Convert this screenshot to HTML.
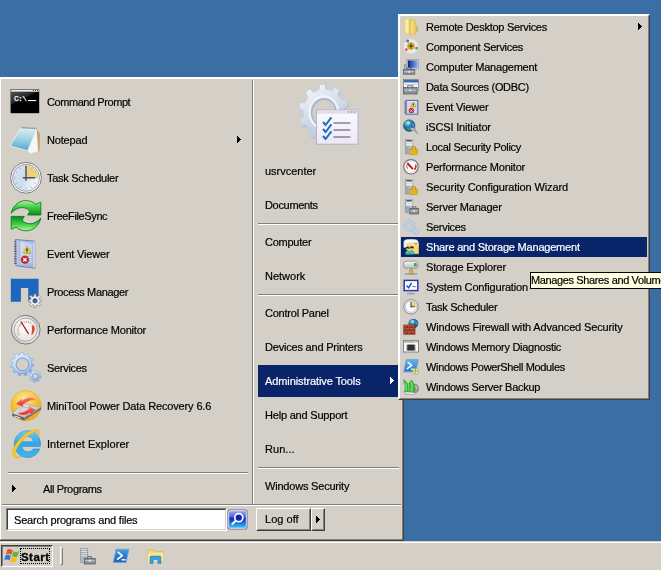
<!DOCTYPE html><html><head><meta charset="utf-8"><title>Start menu</title><style>
html,body{margin:0;padding:0}
body{width:661px;height:570px;background:#3a6ea5;overflow:hidden;position:relative;font-family:"Liberation Sans",sans-serif;font-size:11px;letter-spacing:-0.2px;color:#000;-webkit-font-smoothing:none}
div,span,svg{position:absolute;box-sizing:border-box}
.raised{border:1px solid;border-color:#fff #404040 #404040 #fff;background:#d4d0c8}
.raised>.in{left:0;top:0;right:0;bottom:0;border:1px solid;border-color:#fff #808080 #808080 #fff}
.t{white-space:nowrap;height:14px;line-height:14px;-webkit-text-stroke:0.2px;will-change:transform}
.hl{background:#0a246a}
.w{color:#fff}
.hs{height:2px;border-top:1px solid #808080;border-bottom:1px solid #fff}
.btn{border:1px solid;border-color:#fff #404040 #404040 #fff;background:#d4d0c8}
.btn>.in{left:0;top:0;right:0;bottom:0;border:1px solid;border-color:#d4d0c8 #808080 #808080 #d4d0c8}
</style></head><body>
<div id="taskbar" style="left:0;top:541px;width:661px;height:29px;background:#d4d0c8;border-top:1px solid #d4d0c8"><div style="left:0;top:0;width:661px;height:1px;background:#fff"></div></div>
<div id="startbtn" style="left:1px;top:545px;width:52px;height:22px;background:#d4d0c8;border:1px solid;border-color:#404040 #fff #fff #404040"><div style="left:0;top:0;right:0;bottom:0;border:1px solid;border-color:#808080 #d4d0c8 #d4d0c8 #808080"></div></div>
<svg style="left:4px;top:548px" width="16" height="15" viewBox="0 0 16 15"><path d="M3.3 1.4C5.2 0.4 7 1 8.7 2.4L7.3 7C5.6 5.8 3.8 5.4 1.9 6.4Z" fill="#e8542a"/><path d="M9.3 3.2C11 4.4 13 4.2 15.2 3L13.5 8.4C11.6 9.4 9.8 9.2 8 7.8Z" fill="#6ab43a"/><path d="M1.7 7.2C3.5 6.4 5.2 6.8 6.8 8L5.6 12.6C4 11.4 2.2 11.2 0.2 12.2Z" fill="#2a7cd6"/><path d="M7.6 8.6C9.4 9.9 11.2 10 13.2 9.2L11.5 14.2C9.7 15 8 14.6 6.3 13.4Z" fill="#f6bc1c"/></svg>
<div style="left:20px;top:548px;width:30px;height:16px;border:1px dotted #000"></div>
<span class="t" style="left:21px;top:550px;font-weight:bold;font-size:11.5px;letter-spacing:0.45px;-webkit-text-stroke:0.3px #000">Start</span>
<div style="left:60px;top:547px;width:3px;height:18px;border:1px solid;border-color:#fff #808080 #808080 #fff;background:#d4d0c8"></div>
<svg style="left:79px;top:548px" width="17" height="17" viewBox="0 0 17 17"><path d="M1.6 0.6H8.6V14.6H1.6Z" fill="#e4e8ec" stroke="#7a828c" stroke-width="0.7"/><path d="M2 2.6h6.2M2 4.6h6.2M2 6.6h6.2" stroke="#8a929c" stroke-width="0.8"/><rect x="2" y="8" width="6.2" height="6.2" fill="#aeb6c0"/><path d="M8.8 10.4V8.6h3.6v1.8" fill="none" stroke="#5a6068" stroke-width="0.9"/><rect x="5.4" y="10.4" width="10.8" height="5.6" fill="#8a9098" stroke="#50565e" stroke-width="0.7"/><rect x="6" y="12.2" width="9.6" height="1" fill="#c8ccd2"/><rect x="9.8" y="11.8" width="1.8" height="2" fill="#e8eaee"/></svg>
<svg style="left:112px;top:548px" width="18" height="16" viewBox="0 0 18 16"><defs><linearGradient id="tp" x1="0" y1="0" x2="0" y2="1"><stop offset="0" stop-color="#4a9ae0"/><stop offset="1" stop-color="#1a5ab8"/></linearGradient></defs><path d="M4.2 1.2H17L14 14.4H1.2Z" fill="url(#tp)" stroke="#6aa8e0" stroke-width="0.9" stroke-linejoin="round"/><path d="M5.8 3.8L10.2 7.6L5 11.6" fill="none" stroke="#fff" stroke-width="1.6"/><path d="M9.6 11.8h4" stroke="#fff" stroke-width="1.4"/></svg>
<svg style="left:147px;top:549px" width="17" height="15" viewBox="0 0 17 15"><path d="M0.8 2.4C0.8 1.4 1.2 1 2 1H6.4L7.6 2.4H15C15.8 2.4 16.2 2.8 16.2 3.6V12.6H0.8Z" fill="#f6d978" stroke="#d8b040" stroke-width="0.6"/><path d="M0.8 4.4H16.2V12.6H0.8Z" fill="#fbe9a0"/><path d="M3 14.4V8.6C3 7.4 3.6 7 4.6 7H12.4C13.4 7 14 7.4 14 8.6V14.4H10.8V10.6H6.2V14.4Z" fill="#3aa0dc" stroke="#1a78b8" stroke-width="0.5"/></svg>
<div id="startmenu" class="raised" style="left:-1px;top:77px;width:405px;height:464px"><div class="in"></div></div>
<svg style="left:10px;top:86px" width="32" height="32" viewBox="0 0 32 32"><defs><linearGradient id="cg" x1="0" y1="0" x2="1" y2="1"><stop offset="0" stop-color="#555"/><stop offset="0.45" stop-color="#222"/><stop offset="0.46" stop-color="#000"/></linearGradient></defs><rect x="0.6" y="3.2" width="28.6" height="24" fill="#000"/><rect x="1" y="6" width="28" height="14" fill="url(#cg)"/><rect x="0.6" y="3.2" width="28.6" height="2.8" fill="#8a8a8a"/><rect x="1.2" y="4" width="27.4" height="1.4" fill="#ececec"/><rect x="23" y="4" width="1" height="1" fill="#555"/><rect x="25" y="4" width="1" height="1" fill="#555"/><rect x="27" y="4" width="1" height="1" fill="#555"/><text x="4" y="15" font-family="Liberation Mono,monospace" font-size="8" letter-spacing="-0.7" fill="#fff" stroke="#fff" stroke-width="0.25">C:\</text><rect x="18" y="14" width="8.2" height="1.1" fill="#fff"/></svg>
<span class="t" style="left:47px;top:95px;letter-spacing:-0.43px">Command Prompt</span>
<svg style="left:10px;top:124px" width="32" height="32" viewBox="0 0 32 32"><defs><linearGradient id="ng" x1="0.5" y1="0" x2="0.4" y2="1"><stop offset="0" stop-color="#d8ecf2"/><stop offset="0.5" stop-color="#9cd2e2"/><stop offset="1" stop-color="#48a6c8"/></linearGradient></defs><path d="M27 5.5L29.7 9.6L29.5 27.2L28 27.8Z" fill="#c89a52"/><path d="M26.5 5.2L28.2 27.6L20 29.8L17.4 26.6Z" fill="#f4f6f8" stroke="#cfd6dc" stroke-width="0.5"/><path d="M10.6 4.2L26.7 5.3L17.6 26.8L0.2 21.8Z" fill="url(#ng)" stroke="#e8f2f6" stroke-width="0.8"/><path d="M11.5 3.6L26.5 4.6" stroke="#7a7f86" stroke-width="1.6" stroke-dasharray="1 0.8"/></svg>
<span class="t" style="left:47px;top:133px;letter-spacing:-0.17px">Notepad</span>
<svg style="left:10px;top:162px" width="32" height="32" viewBox="0 0 32 32"><defs><linearGradient id="kg" x1="0" y1="0.3" x2="1" y2="0.8"><stop offset="0" stop-color="#d4e0ee"/><stop offset="0.45" stop-color="#cfdcec"/><stop offset="1" stop-color="#ffffff"/></linearGradient></defs><circle cx="16" cy="15.8" r="15.4" fill="#fefefe" stroke="#6c7076" stroke-width="0.9"/><circle cx="16" cy="15.8" r="13.5" fill="url(#kg)" stroke="#8c9096" stroke-width="0.8"/><path d="M16 15.8V3.4A12.4 12.4 0 0 1 28.4 15.8Z" fill="#f1d07c"/><g stroke="#a2aebe" stroke-width="0.9"><path d="M16 4v1.6M16 26v1.6M4.2 15.8h1.6M26.2 15.8h1.6M10.1 5.6l.8 1.4M21.9 5.6l-.8 1.4M5.8 9.9l1.4.8M5.8 21.7l1.4-.8M10.1 26l.8-1.4M21.9 26l-.8-1.4M26.2 21.7l-1.4-.8M26.2 9.9l-1.4.8"/></g><path d="M16 3.8V18.8" stroke="#3c4856" stroke-width="1.3"/><path d="M12.8 15.8H25.2" stroke="#3c4856" stroke-width="1.4"/></svg>
<span class="t" style="left:47px;top:171px;letter-spacing:-0.28px">Task Scheduler</span>
<svg style="left:10px;top:200px" width="32" height="32" viewBox="0 0 32 32"><defs><linearGradient id="fg" x1="0" y1="0" x2="0" y2="1"><stop offset="0" stop-color="#b4f6a0"/><stop offset="0.45" stop-color="#3ecf44"/><stop offset="1" stop-color="#0c8a1e"/></linearGradient><linearGradient id="fh" x1="0" y1="0" x2="0" y2="1"><stop offset="0" stop-color="#0c8a1e"/><stop offset="0.55" stop-color="#3ecf44"/><stop offset="1" stop-color="#a8f298"/></linearGradient></defs><path d="M1.2 13.2C2.5 7 8 0.6 15.7 0.6C20 0.6 23.5 2 25.8 4.3L30.8 2.1V15H17.6L19.8 11.6C19 9.5 16 7.6 11.9 7.6C8 7.6 4 10 1.2 13.2Z" fill="url(#fg)" stroke="#0a6c18" stroke-width="0.8" stroke-linejoin="round"/><path d="M1.2 13.2C2.5 7 8 0.6 15.7 0.6C20 0.6 23.5 2 25.8 4.3L30.8 2.1V15H17.6L19.8 11.6C19 9.5 16 7.6 11.9 7.6C8 7.6 4 10 1.2 13.2Z" transform="rotate(180 16 15.7)" fill="url(#fg)" stroke="#0a6c18" stroke-width="0.8" stroke-linejoin="round"/></svg>
<span class="t" style="left:47px;top:209px;letter-spacing:-0.38px">FreeFileSync</span>
<svg style="left:10px;top:238px" width="32" height="32" viewBox="0 0 32 32"><defs><linearGradient id="eg" x1="0" y1="0" x2="1" y2="1"><stop offset="0" stop-color="#d2def4"/><stop offset="1" stop-color="#9fb4dc"/></linearGradient></defs><path d="M5.3 1.5L24.6 3.1L24.9 30.2L5.9 27.7Z" fill="#b9c6e4" stroke="#6c7cb6" stroke-width="0.9" stroke-linejoin="round"/><path d="M23.2 4.2L24.6 3.4L24.8 29.8L23.2 28.8Z" fill="#e8ecf8"/><path d="M9.6 3L23 4.3V28.7L9.6 26.9Z" fill="url(#eg)" stroke="#8a9cd0" stroke-width="0.5"/><g stroke="#e4ecfa" stroke-width="0.6"><path d="M10.4 6.6l12 1M10.4 9l12 1M10.4 11.4l12 1M10.4 13.8l12 1M10.4 16.2l12 1M10.4 18.6l12 1M10.4 21l12 1M10.4 23.4l12 1"/></g><g stroke="#5e6684" stroke-width="1.1"><path d="M4 3.8h2.6M4 6.2h2.6M4 8.6h2.6M4 11h2.6M4 13.4h2.6M4 15.8h2.6M4 18.2h2.6M4 20.6h2.6M4 23h2.6M4 25.4h2.6"/></g><path d="M17 8.2L20.8 15.2H13.4Z" fill="#f4dc28" stroke="#b89a08" stroke-width="0.7" stroke-linejoin="round"/><path d="M17 10.4v2.6M17 13.6v1" stroke="#1a1a1a" stroke-width="1.3"/><circle cx="14.9" cy="21.7" r="3.8" fill="#cc2630" stroke="#8e1a22" stroke-width="0.5"/><path d="M13.3 20.1l3.2 3.2M16.5 20.1l-3.2 3.2" stroke="#fff" stroke-width="1.3"/></svg>
<span class="t" style="left:47px;top:247px;letter-spacing:-0.18px">Event Viewer</span>
<svg style="left:10px;top:276px" width="32" height="32" viewBox="0 0 32 32"><path d="M0.8 2.7H28.6V25.8H18.2V11.9H10.9V25.8H0.8Z" fill="#1e67c1"/><path d="M29.49 23.80L31.73 23.81L31.73 25.79L29.49 25.80L28.88 27.27L30.46 28.86L29.06 30.26L27.47 28.68L26.00 29.29L25.99 31.53L24.01 31.53L24.00 29.29L22.53 28.68L20.94 30.26L19.54 28.86L21.12 27.27L20.51 25.80L18.27 25.79L18.27 23.81L20.51 23.80L21.12 22.33L19.54 20.74L20.94 19.34L22.53 20.92L24.00 20.31L24.01 18.07L25.99 18.07L26.00 20.31L27.47 20.92L29.06 19.34L30.46 20.74L28.88 22.33Z" fill="#f2f3f5" stroke="#85898f" stroke-width="0.8" stroke-linejoin="round"/><circle cx="25" cy="24.8" r="2.2" fill="#2a62b4" stroke="#5a6068" stroke-width="0.9"/></svg>
<span class="t" style="left:47px;top:285px;letter-spacing:-0.34px">Process Manager</span>
<svg style="left:10px;top:314px" width="32" height="32" viewBox="0 0 32 32"><defs><radialGradient id="pg" cx="0.45" cy="0.4" r="0.7"><stop offset="0" stop-color="#ffffff"/><stop offset="1" stop-color="#e6dcd8"/></radialGradient><linearGradient id="pr" x1="0" y1="0" x2="1" y2="1"><stop offset="0" stop-color="#ffffff"/><stop offset="0.5" stop-color="#c8c8c8"/><stop offset="1" stop-color="#f4f4f4"/></linearGradient></defs><circle cx="15.7" cy="15.7" r="14.4" fill="url(#pr)" stroke="#6a6e72" stroke-width="0.9"/><circle cx="15.7" cy="15.7" r="11.6" fill="url(#pg)" stroke="#9a9494" stroke-width="0.7"/><path d="M9.2 21A8.6 8.6 0 0 1 21.6 9.6" fill="none" stroke="#8e8a88" stroke-width="2" stroke-dasharray="0.7 1.2"/><path d="M10.4 19.8A7 7 0 0 1 20.6 10.6" fill="none" stroke="#f4f0ee" stroke-width="1"/><path d="M23.3 11.4C25 14.4 24.2 18 21.8 20.6C22.6 17.6 22.8 14.6 22.2 12Z" fill="#d63c12" stroke="#d63c12" stroke-width="0.8" stroke-linejoin="round"/><path d="M10.9 7.5L18.5 19.8" stroke="#b81418" stroke-width="1.3"/></svg>
<span class="t" style="left:47px;top:323px;letter-spacing:-0.19px">Performance Monitor</span>
<svg style="left:10px;top:352px" width="32" height="32" viewBox="0 0 32 32"><defs><linearGradient id="sg" x1="0.2" y1="0" x2="0.7" y2="1"><stop offset="0" stop-color="#f2f8ff"/><stop offset="0.45" stop-color="#b4d2f2"/><stop offset="1" stop-color="#6e9ade"/></linearGradient></defs><path fill-rule="evenodd" d="M22.08 11.61L24.00 12.13L23.75 14.62L21.77 14.74L20.83 17.05L22.17 18.52L20.61 20.48L18.88 19.51L16.84 20.95L17.17 22.90L14.80 23.71L13.87 21.96L11.37 22.07L10.59 23.89L8.16 23.29L8.33 21.31L6.17 20.05L4.53 21.17L2.81 19.35L4.01 17.77L2.88 15.55L0.90 15.60L0.44 13.14L2.30 12.46L2.55 9.98L0.86 8.95L1.80 6.63L3.73 7.07L5.28 5.12L4.42 3.33L6.46 1.89L7.85 3.31L10.21 2.50L10.45 0.53L12.95 0.42L13.35 2.37L15.77 2.97L17.03 1.44L19.20 2.70L18.48 4.55L20.20 6.36L22.09 5.76L23.22 7.99L21.62 9.16ZM12.5 6.1a6.3 6.3 0 1 0 0.01 0Z" fill="url(#sg)" stroke="#8fb2e2" stroke-width="0.7" stroke-linejoin="round"/><circle cx="12.5" cy="12.4" r="6.5" fill="none" stroke="#7c9cd0" stroke-width="0.9"/><circle cx="12.5" cy="12.4" r="7.8" fill="none" stroke="#e2eefb" stroke-width="0.9" opacity="0.8"/><path fill-rule="evenodd" d="M30.00 24.11L31.39 24.53L31.03 26.30L29.58 26.15L28.66 27.53L29.34 28.81L27.84 29.81L26.92 28.68L25.29 29.00L24.87 30.39L23.10 30.03L23.25 28.58L21.87 27.66L20.59 28.34L19.59 26.84L20.72 25.92L20.40 24.29L19.01 23.87L19.37 22.10L20.82 22.25L21.74 20.87L21.06 19.59L22.56 18.59L23.48 19.72L25.11 19.40L25.53 18.01L27.30 18.37L27.15 19.82L28.53 20.74L29.81 20.06L30.81 21.56L29.68 22.48ZM25.2 21.4a2.8 2.8 0 1 0 0.01 0Z" fill="url(#sg)" stroke="#8fb2e2" stroke-width="0.7" stroke-linejoin="round"/><circle cx="25.2" cy="24.2" r="3" fill="none" stroke="#7c9cd0" stroke-width="0.7"/></svg>
<span class="t" style="left:47px;top:361px;letter-spacing:-0.31px">Services</span>
<svg style="left:10px;top:390px" width="32" height="32" viewBox="0 0 32 32"><defs><radialGradient id="mg" cx="0.45" cy="0.3" r="0.75"><stop offset="0" stop-color="#fdeea0"/><stop offset="0.5" stop-color="#f6c33a"/><stop offset="1" stop-color="#e9a01c"/></radialGradient><linearGradient id="md" x1="0" y1="0" x2="1" y2="1"><stop offset="0" stop-color="#f2f2f2"/><stop offset="1" stop-color="#aeb2b6"/></linearGradient><linearGradient id="mr" x1="0" y1="0" x2="0" y2="1"><stop offset="0" stop-color="#f8786a"/><stop offset="1" stop-color="#e22a22"/></linearGradient></defs><circle cx="16" cy="15.7" r="15.3" fill="url(#mg)" stroke="#e4b040" stroke-width="0.6"/><path d="M13.2 13.8L31.2 17.3L14.4 27.7L2.1 23.6Z" fill="url(#md)" stroke="#8e9296" stroke-width="0.5"/><path d="M2.1 23.6L14.4 27.7L14.1 30.6L2.4 26Z" fill="#5c5f63"/><path d="M14.4 27.7L31.2 17.3V19.6L14.1 30.6Z" fill="#6e7276"/><path d="M4.6 25.4L10.4 27.4V28.6L4.6 26.6Z" fill="#f0f0f0"/><ellipse cx="15.6" cy="20.8" rx="6.2" ry="3.4" fill="#d6d8da" stroke="#a4a8ac" stroke-width="0.5" transform="rotate(12 15.6 20.8)"/><g transform="translate(16 16) scale(1.12 1.2) translate(-16 -16)"><path d="M7 14.4L12.4 10V12C16.4 8.2 21.6 8 25 11C21 10.6 17 12 13.2 15L13.6 16.8Z" fill="url(#mr)" stroke="#f6a89c" stroke-width="0.4"/><path d="M25 19.4L19.6 23.4V21.4C15.8 24.2 11.4 24.2 8.4 21.8C12 21.8 15.8 20.6 19 18L18.6 16Z" fill="url(#mr)" stroke="#f6a89c" stroke-width="0.4"/></g></svg>
<span class="t" style="left:47px;top:399px;letter-spacing:-0.14px">MiniTool Power Data Recovery 6.6</span>
<svg style="left:10px;top:428px" width="32" height="32" viewBox="0 0 32 32"><defs><linearGradient id="ig" x1="0" y1="0" x2="0" y2="1"><stop offset="0" stop-color="#6ccaf6"/><stop offset="0.5" stop-color="#2ea6e8"/><stop offset="1" stop-color="#3fb6ee"/></linearGradient></defs><path transform="translate(17.4 16.1) scale(1.07) translate(-17.3 -16.1)" d="M17.4 3.6C24.6 3.6 29.6 9 29.6 16.2C29.6 17 29.5 17.8 29.4 18.4H12.2C12.6 21.4 14.8 23.2 17.8 23.2C20 23.2 21.8 22.2 22.8 20.6H28.8C27.2 25.4 22.8 28.6 17.4 28.6C10.4 28.6 5 23.2 5 16.2C5 9.2 10.4 3.6 17.4 3.6ZM12.2 13.8H22.8C22.4 10.8 20.4 9 17.6 9C14.8 9 12.6 10.8 12.2 13.8Z" fill="url(#ig)" stroke="#2a86cc" stroke-width="0.5"/><path d="M28.6 2.6C26 0 17 3 9.4 11.6C3.6 18.2 0.6 25.6 3.6 29C5.4 31 9 30.2 12 28.4C8.6 29.2 6.2 28.8 5.6 27C4.6 24 7.4 18.2 12.2 13C18 6.8 24.6 3.2 27.4 4.4C28.6 5 28.8 6.4 28.2 8.4C29.8 6 30 3.9 28.6 2.6Z" fill="#f6c829" stroke="#d9a514" stroke-width="0.4"/></svg>
<span class="t" style="left:47px;top:437px;letter-spacing:0.06px">Internet Explorer</span>
<svg style="left:237px;top:136px" width="4" height="7" shape-rendering="crispEdges"><path d="M0 0v7h1v-1h1v-1h1v-1h1v-1h-1v-1h-1v-1h-1v-1z"/></svg>
<div class="hs" style="left:8px;top:472px;width:240px"></div>
<svg style="left:12px;top:485px" width="4" height="7" shape-rendering="crispEdges"><path d="M0 0v7h1v-1h1v-1h1v-1h1v-1h-1v-1h-1v-1h-1v-1z"/></svg>
<span class="t" style="left:43px;top:482px;letter-spacing:-0.36px">All Programs</span>
<div style="left:252px;top:80px;width:2px;height:424px;border-left:1px solid #808080;border-right:1px solid #fff"></div>
<div class="hs" style="left:2px;top:504px;width:399px"></div>
<div style="left:6px;top:508px;width:221px;height:23px;background:#fff;border:1px solid;border-color:#808080 #fff #fff #808080"><div style="left:0;top:0;right:0;bottom:0;border:1px solid;border-color:#404040 #d4d0c8 #d4d0c8 #404040"></div></div>
<span class="t" style="left:14px;top:513px;letter-spacing:-0.20px">Search programs and files</span>
<svg style="left:227px;top:509px" width="21" height="21" viewBox="0 0 21 21"><defs><linearGradient id="sb" x1="0" y1="0" x2="0" y2="1"><stop offset="0" stop-color="#98a4f4"/><stop offset="0.36" stop-color="#4a5cdc"/><stop offset="0.4" stop-color="#0c2cc4"/><stop offset="0.6" stop-color="#1450d4"/><stop offset="1" stop-color="#3cc4f2"/></linearGradient></defs><rect x="0.5" y="0.5" width="20" height="20" rx="2.2" fill="#5c6c8c"/><rect x="1.3" y="1.3" width="18.4" height="18.4" rx="1.6" fill="#e4e8fc"/><rect x="2.2" y="2.2" width="16.6" height="16.6" rx="1" fill="url(#sb)"/><circle cx="11.8" cy="8.7" r="4" fill="#0a26b4" stroke="#fff" stroke-width="1.7"/><path d="M8.6 11.8L5.4 15" stroke="#f4f6fe" stroke-width="2" stroke-linecap="round"/></svg>
<div class="btn" style="left:256px;top:508px;width:55px;height:23px"><div class="in"></div></div>
<span class="t" style="left:265px;top:512px;letter-spacing:0.02px">Log off</span>
<div class="btn" style="left:311px;top:508px;width:14px;height:23px"><div class="in"></div></div>
<svg style="left:316px;top:516px" width="4" height="7" shape-rendering="crispEdges"><path d="M0 0v7h1v-1h1v-1h1v-1h1v-1h-1v-1h-1v-1h-1v-1z"/></svg>
<svg style="left:290px;top:80px" width="76" height="70" viewBox="0 0 76 70"><defs><linearGradient id="ug" x1="0.2" y1="0" x2="0.7" y2="1"><stop offset="0" stop-color="#f4f7fb"/><stop offset="0.5" stop-color="#d0dbea"/><stop offset="1" stop-color="#aebfd6"/></linearGradient><linearGradient id="uw" x1="0" y1="0" x2="0" y2="1"><stop offset="0" stop-color="#fbfaff"/><stop offset="1" stop-color="#ece8f4"/></linearGradient></defs><g transform="translate(35 34.2) scale(0.895 1)"><path fill-rule="evenodd" d="M23.32 1.88L28.04 3.86L26.45 10.05L21.37 9.53L17.77 15.23L20.41 19.60L15.49 23.68L11.68 20.27L5.42 22.76L4.99 27.86L-1.38 28.27L-2.46 23.27L-8.99 21.60L-12.34 25.47L-17.73 22.05L-15.67 17.38L-19.97 12.19L-24.95 13.35L-27.31 7.42L-22.89 4.85L-23.32 -1.88L-28.04 -3.86L-26.45 -10.05L-21.37 -9.53L-17.77 -15.23L-20.41 -19.60L-15.49 -23.68L-11.68 -20.27L-5.42 -22.76L-4.99 -27.86L1.38 -28.27L2.46 -23.27L8.99 -21.60L12.34 -25.47L17.73 -22.05L15.67 -17.38L19.97 -12.19L24.95 -13.35L27.31 -7.42L22.89 -4.85ZM0 -14a14 14 0 1 0 0.01 0Z" fill="#b2c0d4" opacity="0.8"/></g><g transform="translate(33.8 32.4) scale(0.895 1)"><path fill-rule="evenodd" d="M23.32 1.88L28.04 3.86L26.45 10.05L21.37 9.53L17.77 15.23L20.41 19.60L15.49 23.68L11.68 20.27L5.42 22.76L4.99 27.86L-1.38 28.27L-2.46 23.27L-8.99 21.60L-12.34 25.47L-17.73 22.05L-15.67 17.38L-19.97 12.19L-24.95 13.35L-27.31 7.42L-22.89 4.85L-23.32 -1.88L-28.04 -3.86L-26.45 -10.05L-21.37 -9.53L-17.77 -15.23L-20.41 -19.60L-15.49 -23.68L-11.68 -20.27L-5.42 -22.76L-4.99 -27.86L1.38 -28.27L2.46 -23.27L8.99 -21.60L12.34 -25.47L17.73 -22.05L15.67 -17.38L19.97 -12.19L24.95 -13.35L27.31 -7.42L22.89 -4.85ZM0 -14a14 14 0 1 0 0.01 0Z" fill="url(#ug)" stroke="#c0cde0" stroke-width="0.9" stroke-linejoin="round"/><circle cx="0" cy="0" r="16" fill="none" stroke="#eef2f8" stroke-width="2.6"/><circle cx="0" cy="0" r="13.6" fill="none" stroke="#9fb2cc" stroke-width="1.3"/></g><rect x="26.4" y="30" width="41.6" height="34.2" fill="url(#uw)" stroke="#b4acc8" stroke-width="0.9"/><rect x="27" y="30.6" width="40.4" height="3.2" fill="#e2dcee"/><rect x="58" y="31.4" width="1.4" height="1.2" fill="#8a84a0"/><rect x="61" y="31.4" width="1.4" height="1.2" fill="#8a84a0"/><rect x="64" y="31.4" width="1.4" height="1.2" fill="#8a84a0"/><g fill="none" stroke="#1c6cb8" stroke-width="2"><path d="M33 42L35.6 45L41.4 37.4"/><path d="M33 49L35.6 52L41.4 44.4"/><path d="M33 56L35.6 59L41.4 51.4"/></g><g stroke="#8c7c9c" stroke-width="1.6"><path d="M43.4 43h17M43.4 50h17M43.4 57h17"/></g></svg>
<div class="hl" style="left:258px;top:365px;width:140px;height:32px"></div>
<span class="t" style="left:265px;top:164px;letter-spacing:-0.01px">usrvcenter</span>
<span class="t" style="left:265px;top:198px;letter-spacing:-0.32px">Documents</span>
<span class="t" style="left:265px;top:235px;letter-spacing:-0.25px">Computer</span>
<span class="t" style="left:265px;top:269px;letter-spacing:-0.01px">Network</span>
<span class="t" style="left:265px;top:306px;letter-spacing:-0.23px">Control Panel</span>
<span class="t" style="left:265px;top:340px;letter-spacing:-0.20px">Devices and Printers</span>
<span class="t w" style="left:265px;top:374px;letter-spacing:-0.10px">Administrative Tools</span>
<span class="t" style="left:265px;top:408px;letter-spacing:-0.20px">Help and Support</span>
<span class="t" style="left:265px;top:442px;letter-spacing:0.06px">Run...</span>
<span class="t" style="left:265px;top:479px;letter-spacing:-0.20px">Windows Security</span>
<svg style="left:390px;top:377px" width="4" height="7" shape-rendering="crispEdges"><path fill="#fff" d="M0 0v7h1v-1h1v-1h1v-1h1v-1h-1v-1h-1v-1h-1v-1z"/></svg>
<div class="hs" style="left:258px;top:223px;width:141px"></div>
<div class="hs" style="left:258px;top:294px;width:141px"></div>
<div class="hs" style="left:258px;top:467px;width:141px"></div>
<div id="submenu" class="raised" style="left:398px;top:14px;width:252px;height:386px"><div class="in"></div></div>
<div class="hl" style="left:401px;top:237px;width:246px;height:20px"></div>
<svg style="left:403px;top:19px" width="16" height="16" viewBox="0 0 16 16"><defs><linearGradient id="f0" x1="0" y1="0" x2="1" y2="0"><stop offset="0" stop-color="#e2bc4c"/><stop offset="0.3" stop-color="#f4dc80"/><stop offset="1" stop-color="#ecca5c"/></linearGradient><linearGradient id="f1" x1="0" y1="0" x2="1" y2="0"><stop offset="0" stop-color="#f2dc84"/><stop offset="0.6" stop-color="#faf0b4"/><stop offset="1" stop-color="#eccc64"/></linearGradient></defs><path d="M11.4 7.4H14.6V12.8H11.4Z" fill="#f0d878" stroke="#c8a848" stroke-width="0.5"/><rect x="12.8" y="8.6" width="1.2" height="3.2" fill="#5a9a5a"/><rect x="12.8" y="9.6" width="1.2" height="1" fill="#f4f4f4"/><path d="M6.6 0.8L12.8 1.4V15.2L6.6 15.4Z" fill="url(#f0)" stroke="#d4ac44" stroke-width="0.4"/><path d="M1 0.2L6.8 -0.2V15.2L1 14Z" fill="url(#f1)" stroke="#dcb84c" stroke-width="0.4"/></svg>
<span class="t" style="left:426px;top:20px;letter-spacing:-0.27px">Remote Desktop Services</span>
<svg style="left:403px;top:39px" width="16" height="16" viewBox="0 0 16 16"><circle cx="8" cy="7.4" r="7" fill="#f2f2f2" fill-opacity="0.75" stroke="#e6e6e6" stroke-width="0.8"/><circle cx="8" cy="7" r="3.3" fill="#f0c020" stroke="#a87c00" stroke-width="0.6"/><path d="M8 4.6v4.8M5.6 7h4.8" stroke="#3a2c00" stroke-width="1.1"/><circle cx="4.7" cy="1.9" r="1.5" fill="#6a6ad0"/><circle cx="3.4" cy="10.6" r="1.4" fill="#dc5a5a"/><circle cx="13.6" cy="9.2" r="1.4" fill="#5a9a5a"/></svg>
<span class="t" style="left:426px;top:40px;letter-spacing:-0.28px">Component Services</span>
<svg style="left:403px;top:59px" width="16" height="16" viewBox="0 0 16 16"><defs><linearGradient id="c2" x1="0" y1="0" x2="1" y2="0"><stop offset="0" stop-color="#10208a"/><stop offset="1" stop-color="#7ab0f0"/></linearGradient></defs><rect x="3.8" y="0.4" width="11.8" height="9.6" fill="#d8dce4" stroke="#8088a0" stroke-width="0.6"/><rect x="4.8" y="1.4" width="9.8" height="7.4" fill="url(#c2)"/><rect x="0.8" y="5" width="2.2" height="4.4" fill="#9aa0a8"/><rect x="1.2" y="5.4" width="1.4" height="2" fill="#6cc85a"/><path d="M3.8 10.6v-1.6h4.6v1.6" fill="none" stroke="#5a6068" stroke-width="0.9"/><rect x="0.4" y="10.6" width="11.4" height="4.6" fill="#8a9098" stroke="#50565e" stroke-width="0.7"/><rect x="1.0" y="12.2" width="10.2" height="1" fill="#c8ccd2"/><rect x="5.3" y="12.0" width="1.6" height="1.8" fill="#e8eaee"/></svg>
<span class="t" style="left:426px;top:60px;letter-spacing:-0.23px">Computer Management</span>
<svg style="left:403px;top:79px" width="16" height="16" viewBox="0 0 16 16"><rect x="0.4" y="0.5" width="15.2" height="11" fill="#f6f7f9" stroke="#6a7488" stroke-width="0.7"/><rect x="0.8" y="0.9" width="14.4" height="2.6" fill="#4666ac"/><path d="M2 5.4h12" stroke="#a8b0bc" stroke-width="0.7"/><path d="M4.6 8.4v-1.6h5.4v1.6" fill="none" stroke="#5a6068" stroke-width="0.9"/><rect x="0.5" y="8.4" width="13.6" height="6.6" fill="#8a9098" stroke="#50565e" stroke-width="0.7"/><rect x="1.1" y="10.7" width="12.4" height="1" fill="#c8ccd2"/><rect x="6.5" y="10.4" width="1.6" height="1.8" fill="#e8eaee"/></svg>
<span class="t" style="left:426px;top:80px;letter-spacing:-0.32px">Data Sources (ODBC)</span>
<svg style="left:403px;top:99px" width="16" height="16" viewBox="0 0 16 16"><rect x="3" y="1.4" width="11.8" height="13.8" fill="#eceffa" stroke="#5060a8" stroke-width="1"/><path d="M4 4h10M4 6h10M4 8h10M4 10h10M4 12h10M4 13.8h10" stroke="#8a9ad8" stroke-width="0.6"/><path d="M1.4 3h2.2M1.4 4.8h2.2M1.4 6.6h2.2M1.4 8.4h2.2M1.4 10.2h2.2M1.4 12h2.2M1.4 13.8h2.2" stroke="#4a5068" stroke-width="0.8"/><path d="M10.3 2.8L13 7.8H7.6Z" fill="#f4dc28" stroke="#b09008" stroke-width="0.5" stroke-linejoin="round"/><path d="M10.3 4.4v1.8M10.3 6.6v.7" stroke="#222" stroke-width="0.9"/><circle cx="8.4" cy="11.6" r="2.5" fill="#cc2630" stroke="#8e1a22" stroke-width="0.3"/><path d="M7.4 10.6l2 2M9.4 10.6l-2 2" stroke="#fff" stroke-width="0.8"/></svg>
<span class="t" style="left:426px;top:100px;letter-spacing:-0.18px">Event Viewer</span>
<svg style="left:403px;top:119px" width="16" height="16" viewBox="0 0 16 16"><defs><radialGradient id="gl1" cx="0.4" cy="0.3" r="0.75"><stop offset="0" stop-color="#8ae4f4"/><stop offset="0.4" stop-color="#2c7cd8"/><stop offset="1" stop-color="#10328a"/></radialGradient></defs><circle cx="6.2" cy="6.6" r="5.8" fill="url(#gl1)" stroke="#16408e" stroke-width="0.5"/><path d="M1.3 4.9q1.7 -3.5 5.2 -3.2q-2.9 1.7 -2.3 5.2q-1.7 0.6 -2.9 -2.0z" fill="#46c04c"/><path d="M3.3 9.8q2.9 -1.2 5.2 0.6q-2.3 2.3 -5.2 -0.6z" fill="#3aa848"/><path d="M9.4 3.7q2.3 1.7 2.0 5.2q-2.3 -1.7 -2.0 -5.2z" fill="#58c858"/><ellipse cx="4.8" cy="3.7" rx="2.3" ry="1.4" fill="#fff" opacity="0.4"/><path d="M7 8.2L11.6 9.2L12.6 11.2L10.2 12L7.6 10.6Z" fill="#b8c0c8" stroke="#707880" stroke-width="0.6"/><path d="M11.8 11.4L15 15" stroke="#98a4b0" stroke-width="1.6"/></svg>
<span class="t" style="left:426px;top:120px;letter-spacing:-0.16px">iSCSI Initiator</span>
<svg style="left:403px;top:139px" width="16" height="16" viewBox="0 0 16 16"><defs><linearGradient id="tw6" x1="0" y1="0" x2="1" y2="0"><stop offset="0" stop-color="#8c9aae"/><stop offset="1" stop-color="#c8ced8"/></linearGradient></defs><path d="M2.4 0.3H9.8V15H2.4Z" fill="url(#tw6)" stroke="#8a93a2" stroke-width="0.5"/><rect x="2.8" y="0.6" width="6.6" height="6.2" fill="#b4bcc8"/><rect x="3.6" y="1.3" width="5" height="1" fill="#2a2e36"/><rect x="3" y="3.1" width="6.2" height="1.3" fill="#f6f7f9"/><rect x="3" y="5.2" width="6.2" height="1.3" fill="#f6f7f9"/><path d="M8.8 10.8V9.6a1.9 1.9 0 0 1 3.8 0V10.8" fill="none" stroke="#c8960c" stroke-width="1.5"/><rect x="6.8" y="10.6" width="7.8" height="4.7" fill="#f6cc24" stroke="#b8880a" stroke-width="0.6"/><path d="M7.2 12.2h7M7.2 13.8h7" stroke="#c89a10" stroke-width="0.7"/></svg>
<span class="t" style="left:426px;top:140px;letter-spacing:-0.31px">Local Security Policy</span>
<svg style="left:403px;top:159px" width="16" height="16" viewBox="0 0 16 16"><circle cx="8" cy="7.8" r="7.2" fill="#fdfdfd" stroke="#707070" stroke-width="1.1"/><circle cx="8" cy="7.8" r="5.4" fill="none" stroke="#e8e0e0" stroke-width="0.7"/><path d="M3.9 6.2C3.7 7.4 3.9 8.6 4.5 9.6" fill="none" stroke="#7a8a7a" stroke-width="1.1"/><path d="M4.2 4L9.9 10.2" stroke="#c81414" stroke-width="1.9"/><path d="M12.7 5.6C13.2 7.6 12.8 9.4 11.4 10.6" fill="none" stroke="#d42424" stroke-width="1.4"/></svg>
<span class="t" style="left:426px;top:160px;letter-spacing:-0.19px">Performance Monitor</span>
<svg style="left:403px;top:179px" width="16" height="16" viewBox="0 0 16 16"><defs><linearGradient id="tw8" x1="0" y1="0" x2="1" y2="0"><stop offset="0" stop-color="#8c9aae"/><stop offset="1" stop-color="#c8ced8"/></linearGradient></defs><path d="M2.4 0.3H9.8V15H2.4Z" fill="url(#tw8)" stroke="#8a93a2" stroke-width="0.5"/><rect x="2.8" y="0.6" width="6.6" height="6.2" fill="#b4bcc8"/><rect x="3.6" y="1.3" width="5" height="1" fill="#2a2e36"/><rect x="3" y="3.1" width="6.2" height="1.3" fill="#f6f7f9"/><rect x="3" y="5.2" width="6.2" height="1.3" fill="#f6f7f9"/><path d="M8.8 10.8V9.6a1.9 1.9 0 0 1 3.8 0V10.8" fill="none" stroke="#c8960c" stroke-width="1.5"/><rect x="6.8" y="10.6" width="7.8" height="4.7" fill="#f6cc24" stroke="#b8880a" stroke-width="0.6"/><path d="M7.2 12.2h7M7.2 13.8h7" stroke="#c89a10" stroke-width="0.7"/></svg>
<span class="t" style="left:426px;top:180px;letter-spacing:-0.12px">Security Configuration Wizard</span>
<svg style="left:403px;top:199px" width="16" height="16" viewBox="0 0 16 16"><defs><linearGradient id="tw9" x1="0" y1="0" x2="1" y2="0"><stop offset="0" stop-color="#8c9aae"/><stop offset="1" stop-color="#c8ced8"/></linearGradient></defs><path d="M2.4 0.3H9.8V13.8H2.4Z" fill="url(#tw9)" stroke="#8a93a2" stroke-width="0.5"/><rect x="2.8" y="0.6" width="6.6" height="6.2" fill="#b4bcc8"/><rect x="3.6" y="1.3" width="5" height="1" fill="#2a2e36"/><rect x="3" y="3.1" width="6.2" height="1.3" fill="#f6f7f9"/><rect x="3" y="5.2" width="6.2" height="1.3" fill="#f6f7f9"/><path d="M9.4 9.4v-1.6h3.5v1.6" fill="none" stroke="#5a6068" stroke-width="0.9"/><rect x="6.8" y="9.4" width="8.8" height="5.6" fill="#8a9098" stroke="#50565e" stroke-width="0.7"/><rect x="7.4" y="11.4" width="7.6" height="1" fill="#c8ccd2"/><rect x="10.4" y="11.1" width="1.6" height="1.8" fill="#e8eaee"/></svg>
<span class="t" style="left:426px;top:200px;letter-spacing:-0.23px">Server Manager</span>
<svg style="left:403px;top:219px" width="16" height="16" viewBox="0 0 16 16"><path fill-rule="evenodd" d="M10.90 6.87L11.99 7.17L11.81 8.36L10.68 8.31L10.02 9.64L10.73 10.52L9.89 11.38L9.00 10.68L7.68 11.36L7.73 12.49L6.55 12.69L6.24 11.60L4.77 11.38L4.15 12.33L3.08 11.79L3.47 10.73L2.41 9.68L1.35 10.09L0.80 9.02L1.74 8.39L1.50 6.93L0.41 6.63L0.59 5.44L1.72 5.49L2.38 4.16L1.67 3.28L2.51 2.42L3.40 3.12L4.72 2.44L4.67 1.31L5.85 1.11L6.16 2.20L7.63 2.42L8.25 1.47L9.32 2.01L8.93 3.07L9.99 4.12L11.05 3.71L11.60 4.78L10.66 5.41ZM6.2 3.7a3.2 3.2 0 1 0 0.01 0Z" fill="#cfe2f6" stroke="#86acdc" stroke-width="0.6"/><path fill-rule="evenodd" d="M15.09 12.36L15.85 12.66L15.60 13.47L14.80 13.29L14.17 14.04L14.50 14.80L13.75 15.19L13.32 14.49L12.34 14.59L12.04 15.35L11.23 15.10L11.41 14.30L10.66 13.67L9.90 14.00L9.51 13.25L10.21 12.82L10.11 11.84L9.35 11.54L9.60 10.73L10.40 10.91L11.03 10.16L10.70 9.40L11.45 9.01L11.88 9.71L12.86 9.61L13.16 8.85L13.97 9.10L13.79 9.90L14.54 10.53L15.30 10.20L15.69 10.95L14.99 11.38ZM12.6 10.6a1.5 1.5 0 1 0 0.01 0Z" fill="#d6e6f8" stroke="#86acdc" stroke-width="0.5"/></svg>
<span class="t" style="left:426px;top:220px;letter-spacing:-0.31px">Services</span>
<svg style="left:403px;top:239px" width="16" height="16" viewBox="0 0 16 16"><path d="M0.8 3C0.8 1 4 0.3 8 0.3S15.2 1 15.2 3V8.4H0.8Z" fill="#eceef2" stroke="#c4c8d0" stroke-width="0.5"/><ellipse cx="8" cy="2.4" rx="6.4" ry="1.6" fill="#fafbfc"/><path d="M4.8 4.2H15.8V14.8H4.8Z" fill="#f8d878" stroke="#d8a838" stroke-width="0.5"/><path d="M5 5.2H15.6" stroke="#fdf0b8" stroke-width="1"/><path d="M11.6 4.8h2.6" stroke="#6a6a5a" stroke-width="0.8"/><path d="M2.4 15.4C2.4 12.8 3.2 11.6 4.6 11.6S6.8 12.8 6.8 15.4Z" fill="#3cc8a8" stroke="#1a7a58" stroke-width="0.4"/><path d="M6.6 15.2C6.6 12.4 7.4 11.2 8.8 11.2S11 12.4 11 15.2Z" fill="#3cc8b8" stroke="#1a7a68" stroke-width="0.4"/><circle cx="4.6" cy="9.5" r="1.7" fill="#e8c8a0"/><path d="M2.8 9.6A1.8 1.8 0 0 1 6.4 9.6Q4.6 8.6 2.8 9.6Z" fill="#2e2014" stroke="#2e2014" stroke-width="0.5"/><circle cx="8.8" cy="9.1" r="1.7" fill="#e8c8a0"/><path d="M7 9.2A1.8 1.8 0 0 1 10.6 9.2Q8.8 8.2 7 9.2Z" fill="#2e2014" stroke="#2e2014" stroke-width="0.5"/></svg>
<span class="t w" style="left:426px;top:240px;letter-spacing:-0.21px">Share and Storage Management</span>
<svg style="left:403px;top:259px" width="16" height="16" viewBox="0 0 16 16"><defs><linearGradient id="d12" x1="0" y1="0" x2="0" y2="1"><stop offset="0" stop-color="#fafafa"/><stop offset="1" stop-color="#b8bcc2"/></linearGradient></defs><rect x="0.6" y="2.2" width="14.6" height="7" rx="2.4" fill="url(#d12)" stroke="#7a8088" stroke-width="0.7"/><rect x="11.2" y="4.4" width="2.2" height="2.6" fill="#3cb83c" stroke="#1a7a1a" stroke-width="0.4"/><path d="M8 9.4V12" stroke="#6a7078" stroke-width="1"/><rect x="6.2" y="11.6" width="3.8" height="2.6" fill="#f0b820" stroke="#a87800" stroke-width="0.4"/><path d="M2 15h12.4" stroke="#7a8088" stroke-width="1"/></svg>
<span class="t" style="left:426px;top:260px;letter-spacing:-0.16px">Storage Explorer</span>
<svg style="left:403px;top:279px" width="16" height="16" viewBox="0 0 16 16"><rect x="1.2" y="1.4" width="13.6" height="10.2" fill="#fdfdff" stroke="#2a38b0" stroke-width="1.5"/><path d="M3.6 6.4L5.6 8.8L8.6 3.8" fill="none" stroke="#1a58c8" stroke-width="1.5"/><path d="M9.6 7.6h3" stroke="#5a6a9a" stroke-width="1.1"/><path d="M6.4 12.4h3.2v1.6H6.4z" fill="#b0b4ba"/><path d="M4 14.8h8" stroke="#9a9ea6" stroke-width="1.3"/></svg>
<span class="t" style="left:426px;top:280px;letter-spacing:-0.16px">System Configuration</span>
<svg style="left:403px;top:299px" width="16" height="16" viewBox="0 0 16 16"><circle cx="8" cy="7.8" r="7.2" fill="#f4f4f4" stroke="#7a7e84" stroke-width="0.9"/><circle cx="8" cy="7.8" r="5.6" fill="#fcfcfe" stroke="#a0a4aa" stroke-width="0.6"/><path d="M8 7.8V2.4A5.4 5.4 0 0 1 13.4 7.8Z" fill="#f2cf7a"/><path d="M8 3V8.4M7.4 7.8H12" stroke="#3a4654" stroke-width="1.1"/></svg>
<span class="t" style="left:426px;top:300px;letter-spacing:-0.28px">Task Scheduler</span>
<svg style="left:403px;top:319px" width="16" height="16" viewBox="0 0 16 16"><defs><radialGradient id="gl2" cx="0.4" cy="0.3" r="0.75"><stop offset="0" stop-color="#8ae4f4"/><stop offset="0.4" stop-color="#2c7cd8"/><stop offset="1" stop-color="#10328a"/></radialGradient></defs><circle cx="10.4" cy="4.6" r="4.6" fill="url(#gl2)" stroke="#16408e" stroke-width="0.5"/><path d="M6.5 3.2q1.4 -2.8 4.1 -2.5q-2.3 1.4 -1.8 4.1q-1.4 0.5 -2.3 -1.6z" fill="#46c04c"/><path d="M8.1 7.1q2.3 -0.9 4.1 0.5q-1.8 1.8 -4.1 -0.5z" fill="#3aa848"/><path d="M12.9 2.3q1.8 1.4 1.6 4.1q-1.8 -1.4 -1.6 -4.1z" fill="#58c858"/><ellipse cx="9.2" cy="2.3" rx="1.8" ry="1.1" fill="#fff" opacity="0.4"/><rect x="0.8" y="6" width="11.2" height="9.2" fill="#b4482e" stroke="#5e1c0e" stroke-width="0.6"/><path d="M0.8 9h11.2M0.8 12h11.2M4.4 6v3M8.2 6v3M2.6 9v3M6.4 9v3M10 9v3M4.4 12v3M8.2 12v3" stroke="#64200f" stroke-width="0.7"/><path d="M1.2 6.6h10.4M1.2 9.6h10.4M1.2 12.6h10.4" stroke="#d87858" stroke-width="0.5"/></svg>
<span class="t" style="left:426px;top:320px;letter-spacing:-0.15px">Windows Firewall with Advanced Security</span>
<svg style="left:403px;top:339px" width="16" height="16" viewBox="0 0 16 16"><rect x="0.4" y="1.4" width="15" height="11.6" fill="#fafafa" stroke="#6a6e74" stroke-width="0.8"/><rect x="0.8" y="1.8" width="14.2" height="2" fill="#b4b8be"/><path d="M11 2.8h3.4" stroke="#fff" stroke-width="0.8" stroke-dasharray="0.8 0.5"/><rect x="4.4" y="5.6" width="7.2" height="5.8" fill="#2a2a2a"/><path d="M3.4 6.4h9.2M3.4 8h9.2M3.4 9.6h9.2M3.4 11h9.2" stroke="#3a3a3a" stroke-width="0.7"/></svg>
<span class="t" style="left:426px;top:340px;letter-spacing:-0.27px">Windows Memory Diagnostic</span>
<svg style="left:403px;top:359px" width="16" height="16" viewBox="0 0 16 16"><defs><linearGradient id="p17" x1="0" y1="0" x2="0" y2="1"><stop offset="0" stop-color="#6ab4ec"/><stop offset="1" stop-color="#2a72c8"/></linearGradient></defs><path d="M3.4 0.8H15.2L12.6 12.8H0.8Z" fill="url(#p17)" stroke="#5a9ad8" stroke-width="1" stroke-linejoin="round"/><path d="M4.6 3L8.6 6.4L3.8 10" fill="none" stroke="#fff" stroke-width="1.5"/><path d="M8 10.2h3.4" stroke="#fff" stroke-width="1.3"/><circle cx="12.4" cy="12.2" r="3" fill="#f4f4e8" stroke="#7a9a4a" stroke-width="0.6"/><path d="M12.4 9.6v5.2M9.8 12.2h5.2" stroke="#6ab82a" stroke-width="1.1"/><path d="M12.4 12.2h2.4M12.4 12.2v2.4" stroke="#e8c020" stroke-width="1.1"/></svg>
<span class="t" style="left:426px;top:360px;letter-spacing:-0.35px">Windows PowerShell Modules</span>
<svg style="left:403px;top:379px" width="16" height="16" viewBox="0 0 16 16"><path d="M11 5.4C13.4 4.6 15.8 7 15.6 9.8C15.4 12.4 13.6 14 11.4 14Z" fill="#a8948a" stroke="#6a625e" stroke-width="0.5"/><path d="M11.4 7C12.8 6.8 13.8 8 13.8 9.6" fill="none" stroke="#e8e4e0" stroke-width="1"/><path d="M2 12.4H11L11.6 15.6H2.4Z" fill="#f0f2f4" stroke="#8a9098" stroke-width="0.6"/><path d="M3.4 14.2h4" stroke="#b8bcc2" stroke-width="0.8"/><path d="M1.4 12.6C2.6 9 2.4 6 1 3.4L0.8 0.4L4.6 4.6C5.6 8 5.2 10.4 4.6 12.8Z" fill="#34c834" stroke="#1a8a1a" stroke-width="0.5"/><path d="M5.6 12.8C7 9.4 6.8 6.6 5.8 4.6L8.6 1L11.4 5.4C11.8 8.6 11.4 10.8 10.6 13.4Z" fill="#34c834" stroke="#1a8a1a" stroke-width="0.5"/><path d="M8.4 3C9.2 6 9.2 9.4 8.4 12.4" fill="none" stroke="#8af08a" stroke-width="0.9"/><path d="M2.6 4C3.4 7 3.4 9.6 2.8 12" fill="none" stroke="#8af08a" stroke-width="0.8"/></svg>
<span class="t" style="left:426px;top:380px;letter-spacing:-0.27px">Windows Server Backup</span>
<svg style="left:638px;top:23px" width="4" height="7" shape-rendering="crispEdges"><path d="M0 0v7h1v-1h1v-1h1v-1h1v-1h-1v-1h-1v-1h-1v-1z"/></svg>
<div style="left:530px;top:272px;width:140px;height:17px;background:#ffffe1;border:1px solid #000"></div>
<span class="t" style="left:531px;top:273px;letter-spacing:-0.37px">Manages Shares and Volumes</span>
</body></html>
